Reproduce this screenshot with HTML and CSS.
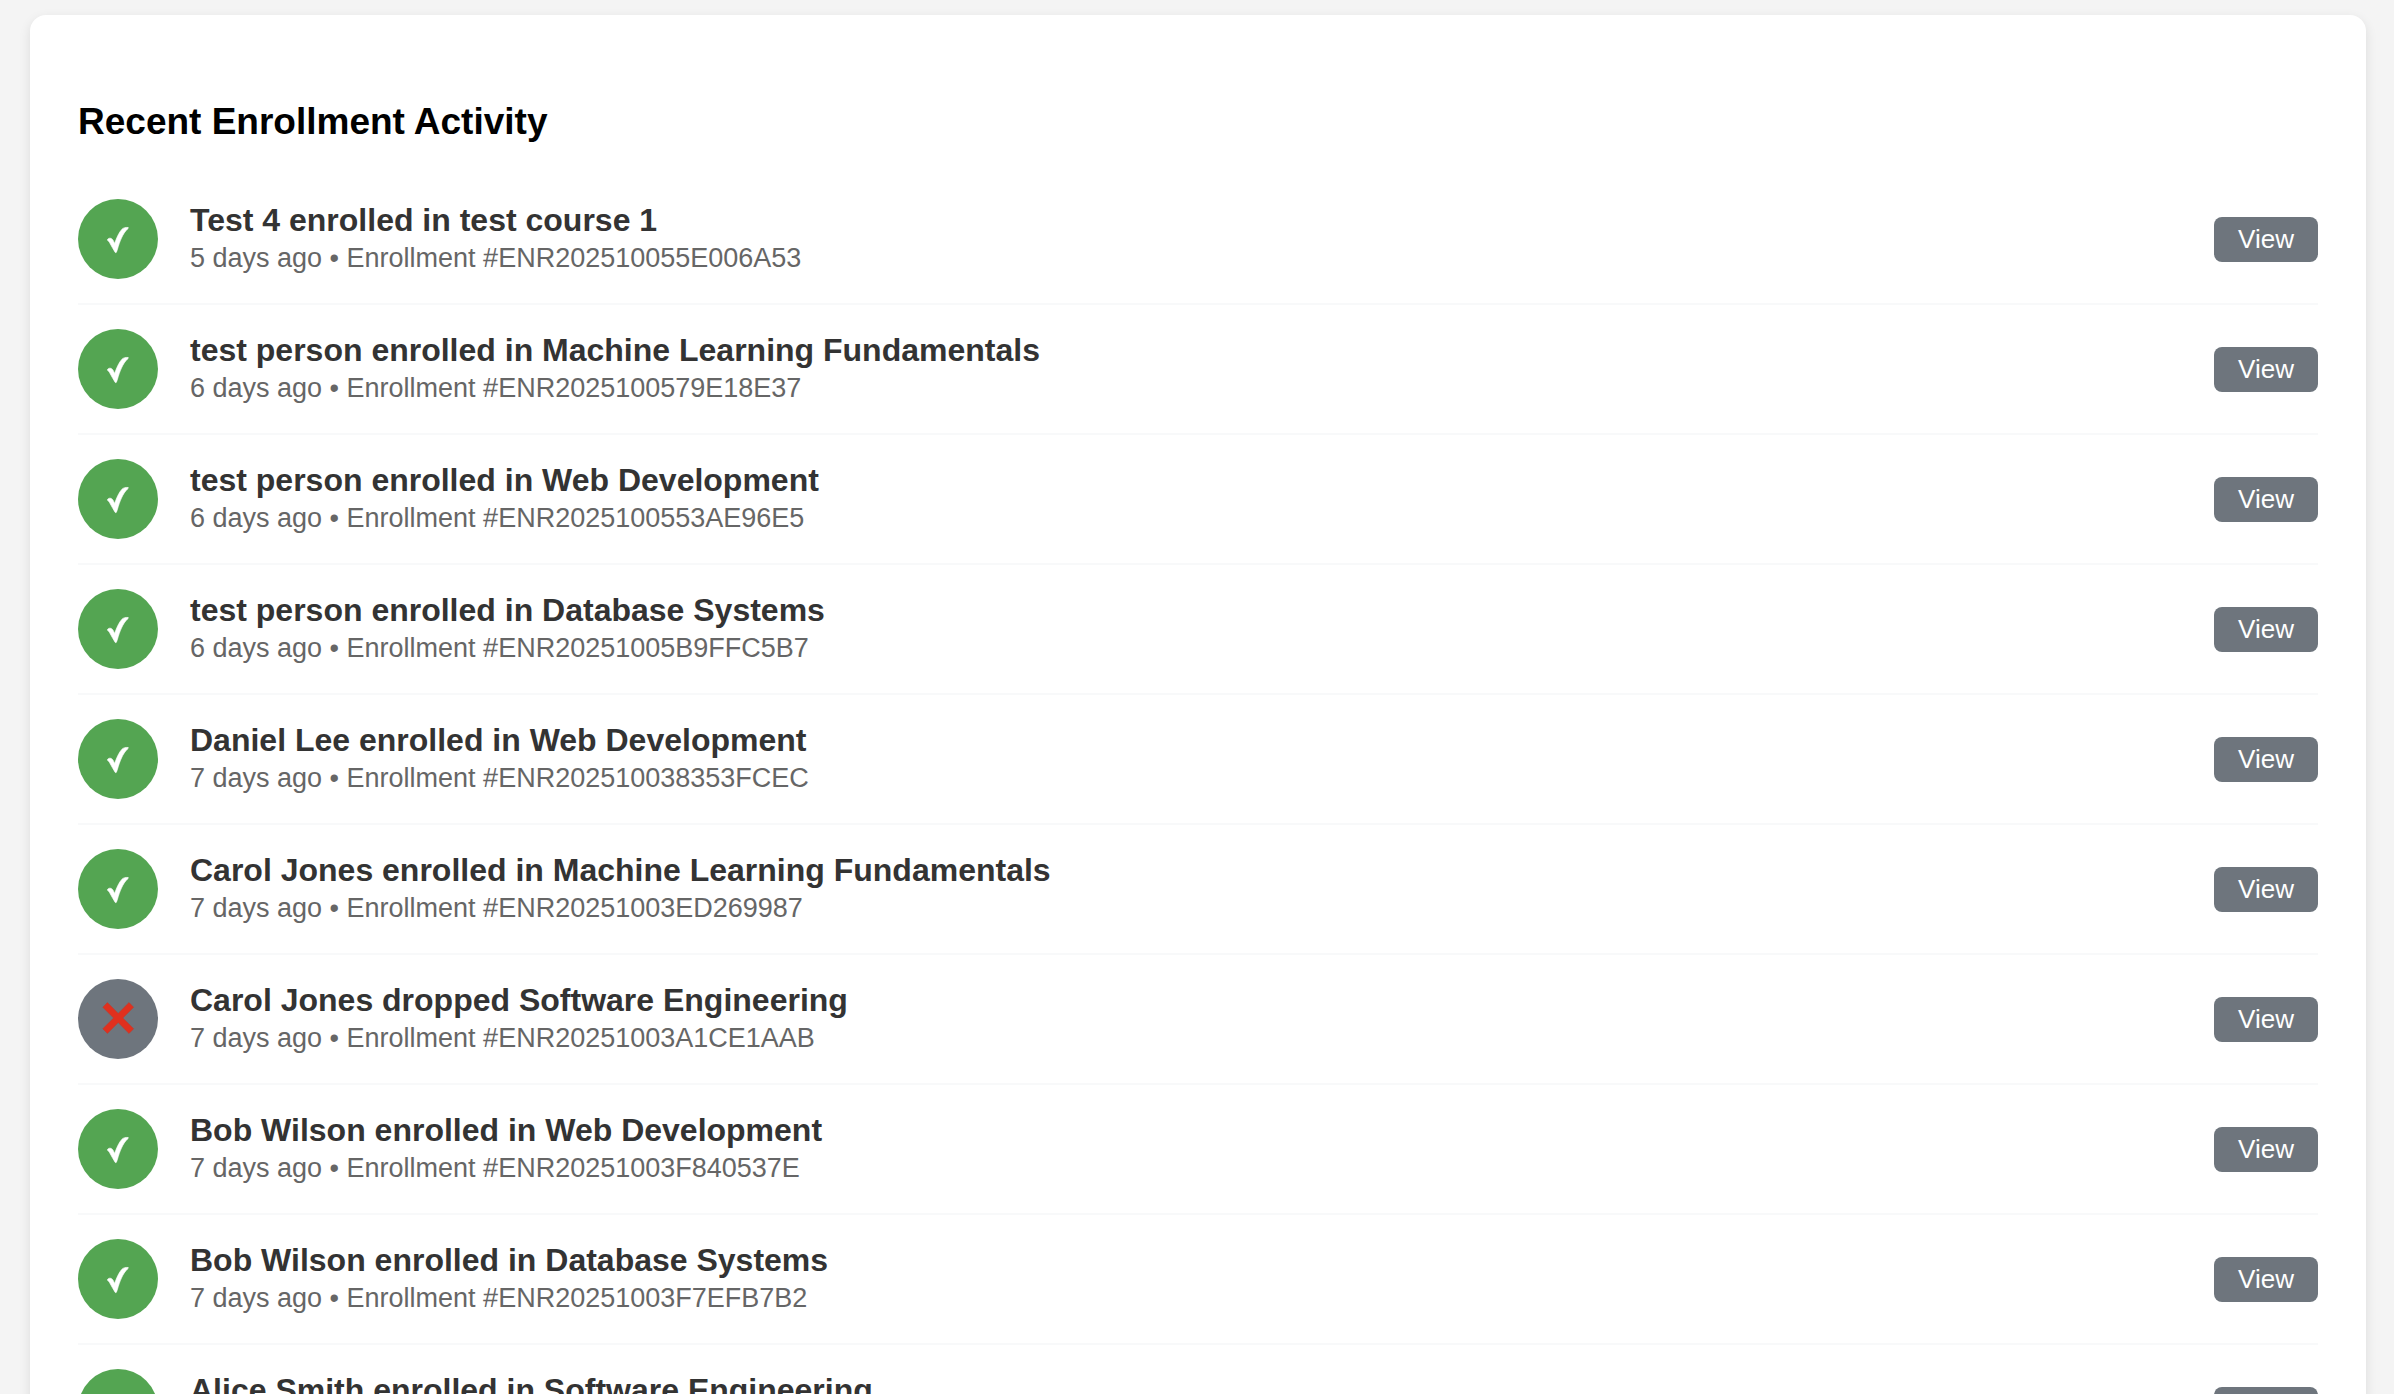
FILE: index.html
```html
<!DOCTYPE html>
<html lang="en">
<head>
<meta charset="utf-8">
<title>Recent Enrollment Activity</title>
<link rel="stylesheet" href="styles.css">
</head>
<body>
<svg class="sprite" aria-hidden="true">
  <symbol id="check" viewBox="0 0 80 80">
    <path fill="#fff" stroke="#fff" stroke-width=".7" stroke-linejoin="round" d="M29.4 41C29.8 39.6 31.4 38.8 33 39.4C34.6 40 35.6 42 36.7 44.6C38.6 38.6 41 33.4 44 30.2C45.6 28.6 48.2 28.3 50.2 28.5C50.5 28.9 50.1 29.6 49.5 30C44.6 34.6 41.6 42.6 39.4 50.4L38.4 53.2C38.1 53.8 37.5 53.8 37.1 53.2C35.3 50.2 33.4 47 31.6 43.6C31 42.5 30.2 41.9 29.4 41Z"/>
  </symbol>
  <symbol id="cross" viewBox="0 0 80 80">
    <path fill="#e0301e" stroke="#bd3a2e" stroke-width=".6" d="M29.4 23.6L40.2 34.4L51 23.6L55.6 28.2L44.8 39L55.6 49.8L51 54.4L40.2 43.6L29.4 54.4L24.8 49.8L35.6 39L24.8 28.2Z"/>
  </symbol>
</svg>
<main class="card">
  <h3 class="heading">Recent Enrollment Activity</h3>
  <ul class="list">
    <li class="item">
      <span class="icon"><svg><use href="#check"/></svg></span>
      <div class="content"><strong class="title">Test 4 enrolled in test course 1</strong><small class="meta">5 days ago • Enrollment #ENR202510055E006A53</small></div>
      <button class="view" type="button">View</button>
    </li>
    <li class="item">
      <span class="icon"><svg><use href="#check"/></svg></span>
      <div class="content"><strong class="title">test person enrolled in Machine Learning Fundamentals</strong><small class="meta">6 days ago • Enrollment #ENR2025100579E18E37</small></div>
      <button class="view" type="button">View</button>
    </li>
    <li class="item">
      <span class="icon"><svg><use href="#check"/></svg></span>
      <div class="content"><strong class="title">test person enrolled in Web Development</strong><small class="meta">6 days ago • Enrollment #ENR2025100553AE96E5</small></div>
      <button class="view" type="button">View</button>
    </li>
    <li class="item">
      <span class="icon"><svg><use href="#check"/></svg></span>
      <div class="content"><strong class="title">test person enrolled in Database Systems</strong><small class="meta">6 days ago • Enrollment #ENR20251005B9FFC5B7</small></div>
      <button class="view" type="button">View</button>
    </li>
    <li class="item">
      <span class="icon"><svg><use href="#check"/></svg></span>
      <div class="content"><strong class="title">Daniel Lee enrolled in Web Development</strong><small class="meta">7 days ago • Enrollment #ENR202510038353FCEC</small></div>
      <button class="view" type="button">View</button>
    </li>
    <li class="item">
      <span class="icon"><svg><use href="#check"/></svg></span>
      <div class="content"><strong class="title">Carol Jones enrolled in Machine Learning Fundamentals</strong><small class="meta">7 days ago • Enrollment #ENR20251003ED269987</small></div>
      <button class="view" type="button">View</button>
    </li>
    <li class="item">
      <span class="icon icon-dropped"><svg><use href="#cross"/></svg></span>
      <div class="content"><strong class="title">Carol Jones dropped Software Engineering</strong><small class="meta">7 days ago • Enrollment #ENR20251003A1CE1AAB</small></div>
      <button class="view" type="button">View</button>
    </li>
    <li class="item">
      <span class="icon"><svg><use href="#check"/></svg></span>
      <div class="content"><strong class="title">Bob Wilson enrolled in Web Development</strong><small class="meta">7 days ago • Enrollment #ENR20251003F840537E</small></div>
      <button class="view" type="button">View</button>
    </li>
    <li class="item">
      <span class="icon"><svg><use href="#check"/></svg></span>
      <div class="content"><strong class="title">Bob Wilson enrolled in Database Systems</strong><small class="meta">7 days ago • Enrollment #ENR20251003F7EFB7B2</small></div>
      <button class="view" type="button">View</button>
    </li>
    <li class="item">
      <span class="icon"><svg><use href="#check"/></svg></span>
      <div class="content"><strong class="title">Alice Smith enrolled in Software Engineering</strong></div>
      <button class="view" type="button">View</button>
    </li>
  </ul>
</main>
</body>
</html>
```
FILE: styles.css
```css
* { box-sizing: border-box; }

body {
  margin: 0;
  height: 100vh;
  overflow: hidden;
  padding: 15px 28px 0 30px;
  background: #f4f4f4;
  color: #000;
  font-family: Arial, "Liberation Sans", sans-serif;
  font-size: 32px;
}

.sprite { display: none; }

.card {
  padding: 48px;
  border-radius: 16px;
  background: #fff;
  box-shadow: 0 4px 12px rgba(0, 0, 0, 0.1);
}

.heading {
  margin: 37px 0 32px;
  font-size: 37px;
  line-height: 43px;
}

.list {
  margin: 0;
  padding: 0;
  list-style: none;
}

.item {
  display: flex;
  align-items: center;
  gap: 32px;
  padding: 24px 0;
  border-bottom: 2px solid #f8f9fa;
}

.icon {
  flex: none;
  width: 80px;
  height: 80px;
  border-radius: 50%;
  background: #54a552;
}

.icon-dropped { background: #6e757d; }

.icon svg {
  display: block;
  width: 100%;
  height: 100%;
}

.content {
  flex: 1;
  min-width: 0;
  min-height: 76px;
}

.title,
.meta { display: block; }

.title {
  color: #333;
  line-height: 38px;
}

.meta {
  color: #666;
  font-size: 27px;
  line-height: 38px;
}

.view {
  flex: none;
  padding: 8px 24px;
  border: 0;
  border-radius: 8px;
  background: #6e757d;
  color: #fff;
  font-family: inherit;
  font-size: 26px;
  line-height: 29px;
  cursor: pointer;
}
```
